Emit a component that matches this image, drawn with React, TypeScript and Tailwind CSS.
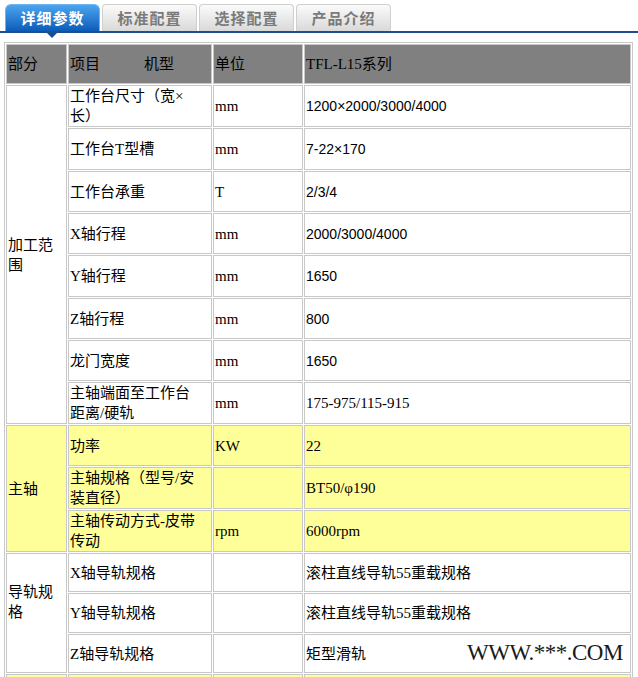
import React from "react";

type Row = { item: string[]; unit: string; value: string; sans?: boolean };
type Section = {
  label: string[];
  bg: string;
  span: string;
  labelPad?: string;
  rows: Row[];
};

const sections: Section[] = [
  {
    label: ["加工范", "围"],
    bg: "bg-white",
    span: "row-span-8",
    rows: [
      { item: ["工作台尺寸（宽×", "长）"], unit: "mm", value: "1200×2000/3000/4000", sans: true },
      { item: ["工作台T型槽"], unit: "mm", value: "7-22×170", sans: true },
      { item: ["工作台承重"], unit: "T", value: "2/3/4", sans: true },
      { item: ["X轴行程"], unit: "mm", value: "2000/3000/4000", sans: true },
      { item: ["Y轴行程"], unit: "mm", value: "1650", sans: true },
      { item: ["Z轴行程"], unit: "mm", value: "800", sans: true },
      { item: ["龙门宽度"], unit: "mm", value: "1650", sans: true },
      { item: ["主轴端面至工作台", "距离/硬轨"], unit: "mm", value: "175-975/115-915" },
    ],
  },
  {
    label: ["主轴"],
    bg: "bg-[#ffff99]",
    span: "row-span-3",
    rows: [
      { item: ["功率"], unit: "KW", value: "22" },
      { item: ["主轴规格（型号/安", "装直径）"], unit: "", value: "BT50/φ190" },
      { item: ["主轴传动方式-皮带", "传动"], unit: "rpm", value: "6000rpm" },
    ],
  },
  {
    label: ["导轨规", "格"],
    bg: "bg-white",
    span: "row-span-3",
    labelPad: "pb-[22px]",
    rows: [
      { item: ["X轴导轨规格"], unit: "", value: "滚柱直线导轨55重载规格" },
      { item: ["Y轴导轨规格"], unit: "", value: "滚柱直线导轨55重载规格" },
      { item: ["Z轴导轨规格"], unit: "", value: "矩型滑轨" },
    ],
  },
  {
    label: [""],
    bg: "bg-[#ffff99]",
    span: "row-span-1",
    rows: [{ item: [""], unit: "", value: "" }],
  },
];

const cell = "border border-[#c8c8c8] flex items-center px-px leading-[20px]";

function Lines({ lines }: { lines: string[] }) {
  return (
    <span>
      {lines.map((l, i) => (
        <React.Fragment key={i}>
          {i > 0 && <br />}
          {l}
        </React.Fragment>
      ))}
    </span>
  );
}

export default function App() {
  const tabs = ["标准配置", "选择配置", "产品介绍"];

  return (
    <div className="relative w-[638px] h-[677px] overflow-hidden bg-white text-black font-['Liberation_Serif','Noto_Sans_CJK_SC',serif] text-[15px]">
      {/* tabs */}
      <div className="flex gap-[2px] pl-[5px] pt-[4px] border-b-2 border-[#1e4f8c]">
        <div className="relative w-[95px] h-[27px] rounded-t-[6px] border border-b-0 border-[#6fb3ee] bg-linear-to-b from-[#4ba5ef] to-[#0a5cb9] flex items-center justify-center text-white font-bold font-['Noto_Sans_CJK_SC',sans-serif] text-[15px] tracking-[1px]">
          详细参数
          <span className="absolute left-[41px] -bottom-[7px] w-0 h-0 border-x-[5px] border-x-transparent border-t-[5px] border-t-[#0b4f9e]" />
        </div>
        {tabs.map((t) => (
          <div
            key={t}
            className="w-[95px] h-[27px] rounded-t-[4px] border border-b-0 border-[#cfcfcf] bg-linear-to-b from-[#fbfbfb] to-[#d9d9d9] flex items-center justify-center text-[#7a7a7a] font-bold font-['Noto_Sans_CJK_SC',sans-serif] text-[15px] tracking-[1px]"
          >
            {t}
          </div>
        ))}
      </div>

      {/* spec table */}
      <div className="ml-[4px] mt-[9px] w-fit border border-[#c8c8c8] p-px grid gap-px grid-cols-[61px_144px_90px_327px] grid-rows-[40px_42px_42px_41px_41px_42px_41px_41px_42px_41px_42px_42px_39px_40px_39px_40px]">
        <div className={`${cell} bg-[#808080]`}>部分</div>
        <div className={`${cell} bg-[#808080]`}>
          <span>项目</span>
          <span className="ml-[44px]">机型</span>
        </div>
        <div className={`${cell} bg-[#808080]`}>单位</div>
        <div className={`${cell} bg-[#808080]`}>TFL-L15系列</div>

        {sections.map((s, si) => (
          <React.Fragment key={si}>
            <div className={`${cell} ${s.bg} ${s.span} ${s.labelPad ?? ""}`}>
              <Lines lines={s.label} />
            </div>
            {s.rows.map((r, ri) => (
              <React.Fragment key={ri}>
                <div className={`${cell} ${s.bg}`}>
                  <Lines lines={r.item} />
                </div>
                <div className={`${cell} ${s.bg}`}>{r.unit}</div>
                <div
                  className={`${cell} ${s.bg} ${
                    r.sans ? "font-['Liberation_Sans','Noto_Sans_CJK_SC',sans-serif] text-[14px]" : ""
                  }`}
                >
                  {r.value}
                </div>
              </React.Fragment>
            ))}
          </React.Fragment>
        ))}
      </div>

      {/* watermark */}
      <div className="absolute left-[467px] top-[641px] font-['Liberation_Serif',serif] text-[23px] leading-none text-[#1a1a1a] tracking-[-0.5px]">
        WWW.***.COM
      </div>
    </div>
  );
}
